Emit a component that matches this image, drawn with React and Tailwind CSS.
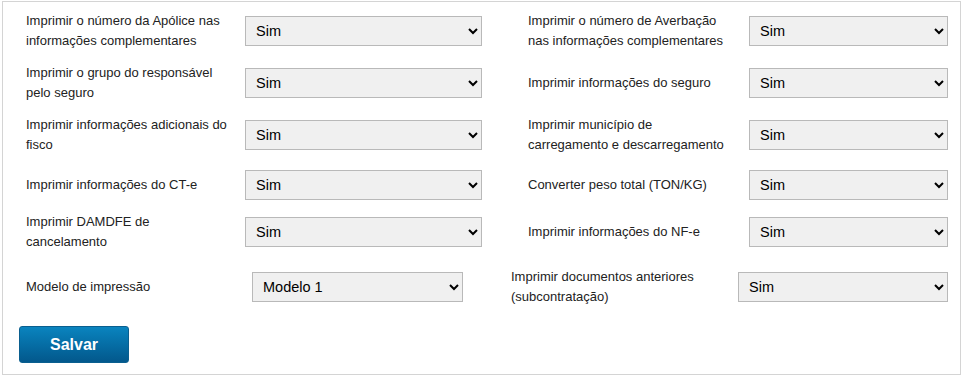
import React from "react";

const font = { fontFamily: '"Liberation Sans", Arial, sans-serif' };

function Select({ className, value }) {
  return (
    <select
      defaultValue={value}
      className={`h-[30px] border border-[#b9b9b9] bg-[#f0f0f0] pl-[6px] text-[14.5px] text-black outline-none ${className}`}
    >
      <option>{value}</option>
    </select>
  );
}

const rows = [
  {
    h: "h-[52px]",
    left: "Imprimir o número da Apólice nas informações complementares",
    right: "Imprimir o número de Averbação nas informações complementares",
  },
  {
    h: "h-[52px]",
    left: "Imprimir o grupo do responsável pelo seguro",
    right: "Imprimir informações do seguro",
  },
  {
    h: "h-[52px]",
    left: "Imprimir informações adicionais do fisco",
    right: "Imprimir município de carregamento e descarregamento",
  },
  {
    h: "h-[47px]",
    left: "Imprimir informações do CT-e",
    right: "Converter peso total (TON/KG)",
  },
  {
    h: "h-[48px]",
    left: "Imprimir DAMDFE de cancelamento",
    right: "Imprimir informações do NF-e",
  },
];

export default function App() {
  return (
    <div className="w-[963px] h-[376px] bg-white" style={font}>
      <div className="ml-[2px] mt-[1px] w-[959px] h-[374px] border border-[#d4d4d4] pt-[3px] text-[13px] leading-[20px] text-[#222]">
        {rows.map((row, i) => (
          <div key={i} className={`flex items-center pl-[23px] ${row.h}`}>
            <div className="w-[219px] pr-[11px]">{row.left}</div>
            <Select className="w-[237px]" value="Sim" />
            <div className="ml-[46px] w-[221px] pr-[17px]">{row.right}</div>
            <Select className="w-[199px]" value="Sim" />
          </div>
        ))}

        <div className="flex items-center pl-[23px] h-[62px]">
          <div className="w-[226px]">Modelo de impressão</div>
          <Select className="w-[211px]" value="Modelo 1" />
          <div className="ml-[48px] w-[227px] pr-[7px]">
            Imprimir documentos anteriores (subcontratação)
          </div>
          <Select className="w-[210px]" value="Sim" />
        </div>

        <div className="pl-[16px] pt-[8px]">
          <button className="w-[110px] h-[37px] rounded-[3px] border border-[#0a5f8f] bg-gradient-to-b from-[#0a84bf] to-[#03588c] text-[16px] font-bold text-white">
            Salvar
          </button>
        </div>
      </div>
    </div>
  );
}
